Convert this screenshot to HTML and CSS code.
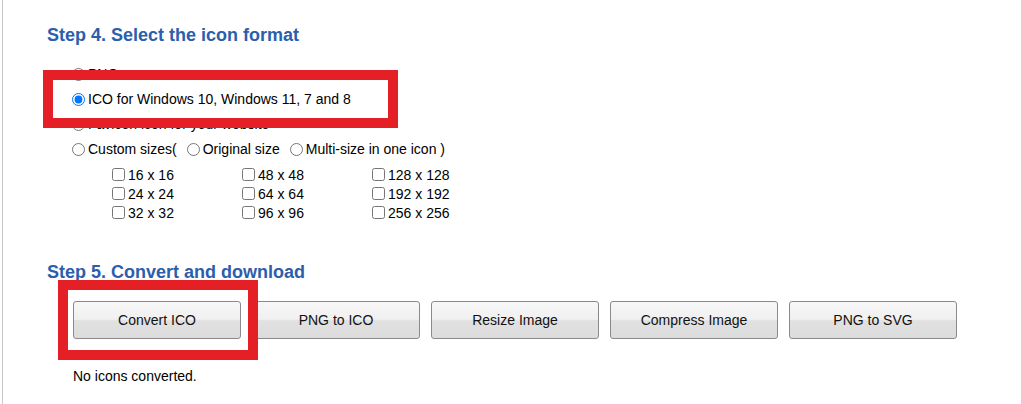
FILE: index.html
```html
<!DOCTYPE html>
<html lang="en">
<head>
    <meta charset="UTF-8">
    <title>Convert ICO</title>
    <link rel="stylesheet" href="styles.css">
</head>
<body>
<div id="page">
    <h2 class="step">Step 4. Select the icon format</h2>
    <ul class="formats">
        <li><label><input type="radio" name="fmt">PNG</label></li>
        <li><label><input type="radio" name="fmt" checked>ICO for Windows 10, Windows 11, 7 and 8</label></li>
        <li><label><input type="radio" name="fmt">Favicon icon for your website</label></li>
        <li>
            <label><input type="radio" name="fmt">Custom sizes(</label>
            <label class="sub"><input type="radio" name="size">Original size</label>
            <label class="sub"><input type="radio" name="size">Multi-size in one icon )</label>
        </li>
    </ul>
    <div class="sizes">
        <label><input type="checkbox">16 x 16</label>
        <label><input type="checkbox">48 x 48</label>
        <label><input type="checkbox">128 x 128</label>
        <label><input type="checkbox">24 x 24</label>
        <label><input type="checkbox">64 x 64</label>
        <label><input type="checkbox">192 x 192</label>
        <label><input type="checkbox">32 x 32</label>
        <label><input type="checkbox">96 x 96</label>
        <label><input type="checkbox">256 x 256</label>
    </div>

    <h2 class="step step5">Step 5. Convert and download</h2>
    <div class="buttons">
        <button>Convert ICO</button>
        <button>PNG to ICO</button>
        <button>Resize Image</button>
        <button>Compress Image</button>
        <button>PNG to SVG</button>
    </div>
    <p class="status">No icons converted.</p>

    <!-- annotation boxes -->
    <div class="mark mark1"></div>
    <div class="mark mark2"></div>
</div>
</body>
</html>
```

FILE: styles.css
```css
*{
    margin:0;
    padding:0;
}
ul{
    list-style:none;
}
body{
    font-family:"Liberation Sans", Arial, sans-serif;
    font-size:14px;
    color:#000;
    background:#fff;
}
#page{
    position:relative;
    margin-left:2px;
    border-left:1px solid #c8c8c8;
    padding:25px 0 0 44px;
    min-height:404px;
    box-sizing:border-box;
}
.step{
    font-size:18px;
    font-weight:bold;
    color:#2b5ead;
    line-height:20px;
}
.formats{
    margin:17px 0 0 25px;
}
.formats li{
    height:25px;
    line-height:25px;
    display:flex;
    align-items:center;
}
.formats label{
    display:flex;
    align-items:center;
}
.formats label.sub{
    margin-left:10px;
}
.formats input{
    width:13px;
    height:13px;
    margin:0 3px 0 0;
}
.sizes{
    margin:3px 0 0 65px;
    display:grid;
    grid-template-columns:130px 130px 130px;
}
.sizes label{
    display:flex;
    align-items:center;
    height:19px;
}
.sizes input{
    width:13px;
    height:13px;
    margin:0 3px 0 0;
}
.step5{
    margin-top:40px;
}
.buttons{
    display:flex;
    gap:11px;
    margin:19px 0 0 26px;
}
.buttons button{
    width:168px;
    height:38px;
    font-family:"Liberation Sans", Arial, sans-serif;
    font-size:14px;
    color:#111;
    border:1px solid #8a8a8a;
    border-radius:3px;
    background:linear-gradient(#f7f7f7 0%, #f0f0f0 48%, #e1e1e1 52%, #dcdcdc 100%);
    cursor:pointer;
}
.status{
    margin:29px 0 0 26px;
}
.mark{
    position:absolute;
    border:10px solid #e42026;
    box-sizing:border-box;
}
.mark1{
    left:40px;
    top:70px;
    width:355px;
    height:58px;
}
.mark2{
    left:55px;
    top:280px;
    width:200px;
    height:80px;
}
```
